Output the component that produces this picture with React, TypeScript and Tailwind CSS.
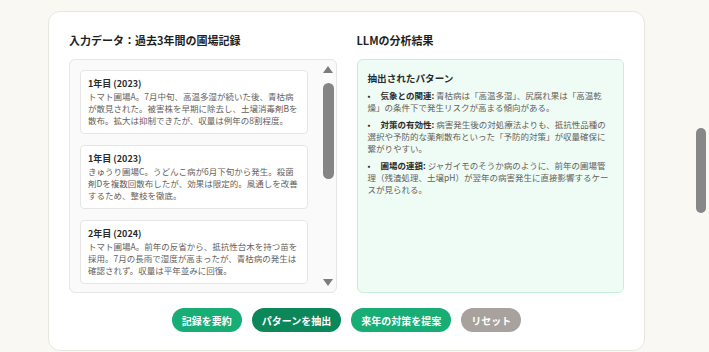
const records = [
  {
    year: '1年目 (2023)',
    lines: [
      'トマト圃場A。7月中旬、高温多湿が続いた後、青枯病',
      'が散見された。被害株を早期に除去し、土壌消毒剤Bを',
      '散布。拡大は抑制できたが、収量は例年の8割程度。',
    ],
  },
  {
    year: '1年目 (2023)',
    lines: [
      'きゅうり圃場C。うどんこ病が6月下旬から発生。殺菌',
      '剤Dを複数回散布したが、効果は限定的。風通しを改善',
      'するため、整枝を徹底。',
    ],
  },
  {
    year: '2年目 (2024)',
    lines: [
      'トマト圃場A。前年の反省から、抵抗性台木を持つ苗を',
      '採用。7月の長雨で湿度が高まったが、青枯病の発生は',
      '確認されず。収量は平年並みに回復。',
    ],
  },
]

const patterns = [
  {
    label: '気象との関連:',
    lines: [
      ' 青枯病は「高温多湿」、尻腐れ果は「高温乾',
      '燥」の条件下で発生リスクが高まる傾向がある。',
    ],
  },
  {
    label: '対策の有効性:',
    lines: [
      ' 病害発生後の対処療法よりも、抵抗性品種の',
      '選択や予防的な薬剤散布といった「予防的対策」が収量確保に',
      '繋がりやすい。',
    ],
  },
  {
    label: '圃場の連鎖:',
    lines: [
      ' ジャガイモのそうか病のように、前年の圃場管',
      '理（残渣処理、土壌pH）が翌年の病害発生に直接影響するケー',
      'スが見られる。',
    ],
  },
]

const buttons = [
  { label: '記録を要約', cls: 'bg-[#17ad74]' },
  { label: 'パターンを抽出', cls: 'bg-[#0b875a]' },
  { label: '来年の対策を提案', cls: 'bg-[#17ad74]' },
  { label: 'リセット', cls: 'bg-[#a8a29e]' },
]

function RecordList() {
  return (
    <div className="flex h-[234px] overflow-hidden rounded-[6px] border border-[#e7e6e3] bg-[#fafafa]">
      <div className="flex flex-1 flex-col gap-[11px] pt-[10px] pl-[10px] pr-[13px]">
        {records.map((r, i) => (
          <div
            key={i}
            className="shrink-0 rounded-[4px] border border-[#e7e5e4] bg-white px-[7px] pt-[6px] pb-[7px]"
          >
            <div className="text-[9px] leading-[13px] font-bold text-[#2b2b2b]">{r.year}</div>
            <p className="text-[8.5px] leading-[12px] whitespace-nowrap text-[#66615c]">
              {r.lines.map((l, j) => (
                <span key={j} className="block">
                  {l}
                </span>
              ))}
            </p>
          </div>
        ))}
      </div>
      <div className="flex w-[15px] shrink-0 flex-col items-center pt-[6px] pb-[6px]">
        <div className="h-0 w-0 border-x-[5.5px] border-b-[7px] border-x-transparent border-b-[#7d7d7d]" />
        <div className="mt-[10px] h-[96px] w-[11px] rounded-full bg-[#858585]" />
        <div className="flex-1" />
        <div className="h-0 w-0 border-x-[5.5px] border-t-[7px] border-x-transparent border-t-[#7d7d7d]" />
      </div>
    </div>
  )
}

function Analysis() {
  return (
    <div className="h-[234px] rounded-[6px] border border-[#c4efd9] bg-[#eefcf5] px-[10px] pt-[11px]">
      <h3 className="text-[9.6px] leading-[14px] font-bold text-[#2b2b2b]">抽出されたパターン</h3>
      <ul className="mt-[4px] flex flex-col gap-[5px]">
        {patterns.map((p, i) => (
          <li key={i} className="text-[8.5px] leading-[12px] whitespace-nowrap text-[#66615c]">
            {p.lines.map((l, j) => (
              <span key={j} className="block">
                {j === 0 && (
                  <>
                    <span className="inline-block w-[13px] text-[#2b2b2b]">•</span>
                    <b className="font-bold text-[#2b2b2b]">{p.label}</b>
                  </>
                )}
                {l}
              </span>
            ))}
          </li>
        ))}
      </ul>
    </div>
  )
}

export default function App() {
  return (
    <div
      className="flex h-[352px] w-[709px] overflow-hidden bg-[#faf8f3]"
      style={{ fontFamily: '"Noto Sans CJK JP", "Noto Sans", sans-serif' }}
    >
      <main className="flex-1 pt-[11px]">
        <section className="mx-auto h-[340px] w-[597px] rounded-[12px] border border-[#e8e6e1] bg-white px-[20px] pt-[21px]">
          <div className="grid grid-cols-2 gap-[20px]">
            <div>
              <h2 className="mb-[12px] text-[11px] leading-[14px] font-bold text-[#1f1f1f]">
                入力データ：過去3年間の圃場記録
              </h2>
              <RecordList />
            </div>
            <div>
              <h2 className="mb-[12px] text-[11px] leading-[14px] font-bold text-[#1f1f1f]">
                LLMの分析結果
              </h2>
              <Analysis />
            </div>
          </div>
          <div className="mt-[15px] flex justify-center gap-[10px]">
            {buttons.map((b) => (
              <button
                key={b.label}
                type="button"
                className={`h-[24px] rounded-full px-[10px] text-[10px] font-bold text-white ${b.cls}`}
              >
                {b.label}
              </button>
            ))}
          </div>
        </section>
      </main>
      <aside className="flex w-[16px] shrink-0 justify-center">
        <div className="mt-[128px] h-[85px] w-[10px] rounded-full bg-[#878787]" />
      </aside>
    </div>
  )
}
